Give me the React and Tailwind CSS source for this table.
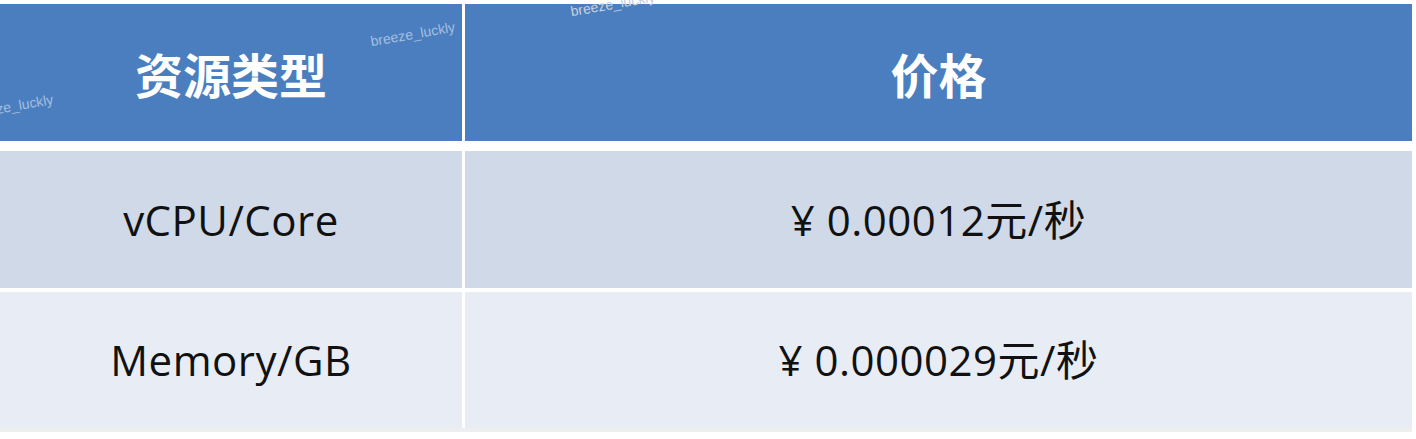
export default function App() {
  const cjk = { fontFamily: '"Noto Sans CJK SC", "Noto Sans", sans-serif' };
  const body = { fontFamily: '"Open Sans", "Noto Sans CJK SC", sans-serif', letterSpacing: '0.5px' };
  const wm = { fontFamily: '"Liberation Sans", sans-serif' };
  return (
    <div className="relative w-[1416px] h-[439px] bg-white overflow-hidden">
      <div className="flex flex-col pt-[4px] pr-[4px]">
        <div className="grid grid-cols-[462px_1fr] gap-x-[3px] h-[137px] bg-white">
          <div className="bg-[#4a7ebf] flex items-center justify-center">
            <span className="text-white font-bold text-[48px] leading-none" style={cjk}>资源类型</span>
          </div>
          <div className="bg-[#4a7ebf] flex items-center justify-center">
            <span className="text-white font-bold text-[48px] leading-none" style={cjk}>价格</span>
          </div>
        </div>
        <div className="grid grid-cols-[462px_1fr] gap-x-[3px] h-[137px] mt-[10px]">
          <div className="bg-[#cfd9e7] flex items-center justify-center">
            <span className="text-[#111] text-[42px] leading-none" style={body}>vCPU/Core</span>
          </div>
          <div className="bg-[#cfd9e7] flex items-center justify-center">
            <span className="text-[#111] text-[42px] leading-none" style={body}>¥ 0.00012元/秒</span>
          </div>
        </div>
        <div className="grid grid-cols-[462px_1fr] gap-x-[3px] h-[136px] mt-[4px]">
          <div className="bg-[#e8edf5] flex items-center justify-center">
            <span className="text-[#111] text-[42px] leading-none" style={body}>Memory/GB</span>
          </div>
          <div className="bg-[#e8edf5] flex items-center justify-center">
            <span className="text-[#111] text-[42px] leading-none" style={body}>¥ 0.000029元/秒</span>
          </div>
        </div>
        <div className="h-[4px] bg-[#eeeeee]"></div>
      </div>
      <span className="absolute left-[370px] top-[24px] text-[14px] text-white/50 -rotate-[10deg]" style={wm}>breeze_luckly</span>
      <span className="absolute left-[-4px] top-[94px] text-[14px] text-white/50 -rotate-[10deg]" style={wm}>ze_luckly</span>
      <span className="absolute left-[570px] top-[-6px] text-[14px] text-[#c8d0dc] -rotate-[10deg]" style={wm}>breeze_luckly</span>
    </div>
  );
}
